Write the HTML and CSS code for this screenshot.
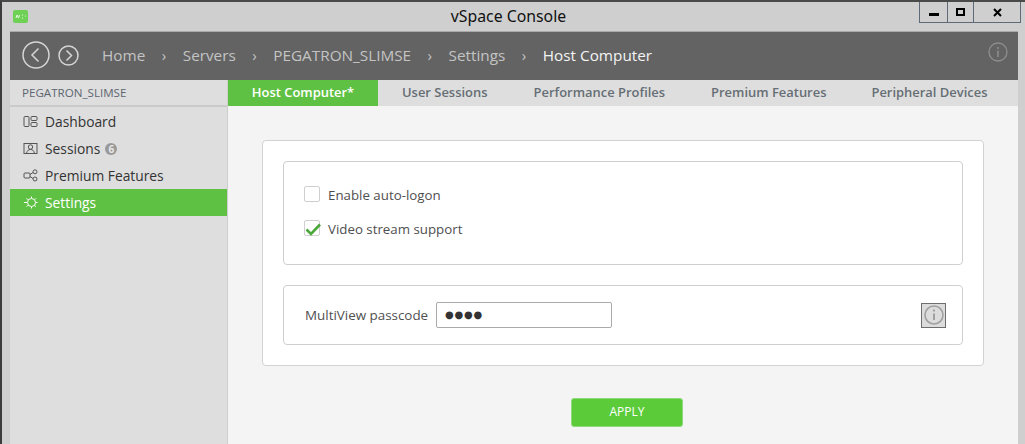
FILE: index.html
```html
<!DOCTYPE html>
<html lang="en">
<head>
<meta charset="utf-8">
<title>vSpace Console</title>
<link rel="stylesheet" href="styles.css">
</head>
<body>
<div class="window">
  <div class="titlebar">
    <svg class="app-icon" width="15" height="13" viewBox="0 0 15 13"><rect width="15" height="13" rx="2" fill="#6fd056"/><path d="M3 8l1-3 1.500 3 1-3M9 5h1M9 8h1M12 6h1" fill="none" stroke="#e8f8e2" stroke-width="1"/></svg>
    <div class="title">vSpace Console</div>
    <div class="winbtns">
      <div class="winbtn min"><span class="min-glyph"></span></div>
      <div class="winbtn max"><span class="max-glyph"></span></div>
      <div class="winbtn close"><svg width="9" height="9" viewBox="0 0 9 9"><path d="M1 1l7 7M8 1l-7 7" stroke="#000" stroke-width="2" fill="none"/></svg></div>
    </div>
  </div>
  <div class="app">
    <header class="crumbbar">
      <svg class="nav-back" width="28" height="28" viewBox="0 0 28 28"><circle cx="14" cy="14" r="13" fill="none" stroke="#d5d5d5" stroke-width="1.500"/><path d="M16.500 7.500L10 14l6.500 6.500" fill="none" stroke="#d5d5d5" stroke-width="1.500"/></svg>
      <svg class="nav-fwd" width="21" height="21" viewBox="0 0 21 21"><circle cx="10.500" cy="10.500" r="9.500" fill="none" stroke="#d5d5d5" stroke-width="1.500"/><path d="M8.500 5.500l5 5-5 5" fill="none" stroke="#d5d5d5" stroke-width="1.500"/></svg>
      <nav class="crumbs">
        <span>Home</span><i>›</i><span>Servers</span><i>›</i><span>PEGATRON_SLIMSE</span><i>›</i><span>Settings</span><i>›</i><span class="current">Host Computer</span>
      </nav>
      <svg class="head-info" width="20" height="20" viewBox="0 0 20 20"><circle cx="10" cy="10" r="9" fill="none" stroke="#8f8f8f" stroke-width="1.300"/><path d="M10 8.500v6.500M10 5v2" stroke="#8f8f8f" stroke-width="1.500"/></svg>
    </header>
    <div class="body">
      <aside class="sidebar">
        <div class="server">PEGATRON_SLIMSE</div>
        <ul class="menu">
          <li><svg width="15" height="13" viewBox="0 0 15 13"><g fill="none" stroke="#555"><rect x="1" y="1.500" width="5" height="10" rx="1"/><rect x="8" y="1.500" width="6" height="4" rx="1"/><rect x="8" y="7.500" width="6" height="4" rx="1"/></g></svg>Dashboard</li>
          <li><svg width="15" height="13" viewBox="0 0 15 13"><g fill="none" stroke="#555"><rect x="1" y="1.500" width="13" height="10"/><circle cx="7.500" cy="5" r="2.200"/><path d="M3.500 11.500c.5-3 2-4 4-4s3.500 1 4 4"/></g></svg>Sessions<b class="badge">6</b></li>
          <li><svg width="15" height="13" viewBox="0 0 15 13"><g fill="none" stroke="#555"><rect x="1" y="4" width="6" height="5" rx="1"/><circle cx="12" cy="2.800" r="2"/><circle cx="12" cy="10" r="2"/><path d="M7 5.500L10 3.500M7 7.500L10 9.500"/></g></svg>Premium Features</li>
          <li class="active"><svg width="15" height="13" viewBox="0 0 15 13"><g fill="none" stroke="#fff"><circle cx="8.500" cy="6.500" r="4"/><path d="M8.500 .5v1.500M8.500 11v1.500M1 6.500h3M13 6.500h1.500M3.500 2.300l1.500 1.500M3.500 10.700l1.500-1.500M13 2.300l-1.200 1.200M13 10.700l-1.200-1.200"/></g></svg>Settings</li>
        </ul>
      </aside>
      <main class="main">
        <div class="tabs">
          <div class="tab active">Host Computer*</div>
          <div class="tab t2">User Sessions</div>
          <div class="tab t3">Performance Profiles</div>
          <div class="tab t4">Premium Features</div>
          <div class="tab t5">Peripheral Devices</div>
        </div>
        <div class="content">
          <section class="card">
            <div class="panel options">
              <label class="check"><span class="box"></span>Enable auto-logon</label>
              <label class="check"><span class="box"><svg width="17" height="15" viewBox="0 0 17 15"><path d="M1.500 7.500L6 12 15 2.500" fill="none" stroke="#4aa83a" stroke-width="2.600"/></svg></span>Video stream support</label>
            </div>
            <div class="panel passcode">
              <span class="pass-label">MultiView passcode</span>
              <div class="pass-input">●●●●</div>
              <div class="info-btn"><svg width="20" height="20" viewBox="0 0 20 20"><circle cx="10" cy="10" r="9" fill="none" stroke="#a0a0a0" stroke-width="1.600"/><path d="M10 8.500v6.500M10 4.500v2" stroke="#a0a0a0" stroke-width="2"/></svg></div>
            </div>
          </section>
          <button class="apply">APPLY</button>
        </div>
      </main>
    </div>
  </div>
</div>
</body>
</html>
```
FILE: styles.css
```css
* { box-sizing: border-box; }
html, body { margin: 0; height: 100%; overflow: hidden; }
body { font-family: "Open Sans", "Noto Sans", sans-serif; }
.window {
  width: 1025px; height: 444px;
  background: #cfcfcf;
  border-top: 2px solid #4a4a4a;
  border-left: 2px solid #3c3c3c;
  display: flex; flex-direction: column;
}
.titlebar {
  height: 29px; flex: none;
  display: flex; align-items: flex-start;
  position: relative;
}
.app-icon { margin: 8px 0 0 11px; }
.title {
  position: absolute; left: 0; right: 0; top: 5px;
  text-align: center; font-size: 15.800px; color: #111; line-height: 19px;
  font-family: "Noto Sans", sans-serif;
  padding-right: 10px;
}
.winbtns {
  position: absolute; right: 4px; top: 0;
  display: flex; height: 21px;
  border: 1px solid #5f6a78; border-top: 0;
}
.winbtn { display: flex; align-items: center; justify-content: center; height: 100%; }
.min { width: 28px; border-right: 1px solid #5f6a78; }
.max { width: 26px; border-right: 1px solid #5f6a78; }
.close { width: 46px; }
.min-glyph { width: 10px; height: 3px; background: #000; margin-top: 4px; }
.max-glyph { width: 9px; height: 8px; border: 2px solid #000; }
.app {
  flex: 1; margin: 0 7px 0 8px;
  display: flex; flex-direction: column;
  min-height: 0;
}
.crumbbar {
  height: 49px; flex: none; background: #636363;
  border-top: 1px solid #a9a9a9;
  display: flex; align-items: center;
  padding: 0 10px 2px 12px;
  color: #c4c4c4;
}
.nav-fwd { margin-left: 8px; }
.crumbs {
  margin-left: 23px; flex: 1;
  display: flex; align-items: center;
  font-size: 15.300px; white-space: nowrap;
}
.crumbs i { font-style: normal; margin: 0 16.500px; font-size: 15px; }
.crumbs .current { color: #f4f4f4; }
.head-info { margin-top: -6px; }
.body { flex: 1; display: flex; min-height: 0; }
.sidebar {
  width: 218px; flex: none; background: #dedede;
  border-right: 1px solid #cdcdcd;
}
.server {
  height: 27px; border-bottom: 2px solid #cacaca;
  padding-left: 12px;
  font-size: 11.600px; line-height: 25px; color: #5d6670;
}
.menu { list-style: none; margin: 1px 0 0; padding: 0; }
.menu li {
  height: 27px; display: flex; align-items: center;
  padding-left: 13px;
  font-size: 13.800px; color: #333;
}
.menu li svg { margin-right: 7px; flex: none; }
.menu .active { background: #5fc144; color: #fff; }
.badge {
  width: 12px; height: 12px; border-radius: 50%;
  background: #9a9a9a; color: #e8e8e8;
  font-size: 10px; font-weight: 700; line-height: 12px; text-align: center;
  margin-left: 5px;
}
.main { flex: 1; display: flex; flex-direction: column; background: #f4f4f4; min-width: 0; }
.tabs {
  height: 26px; flex: none; background: #dedede;
  display: flex; align-items: center;
  font-size: 12.950px; font-weight: 600; color: #666e75;
}
.tab { height: 100%; line-height: 25px; white-space: nowrap; }
.tab.active { width: 150px; background: #5fc144; color: #fff; text-align: center; }
.t2 { margin-left: 24px; }
.t3 { margin-left: 46px; }
.t4 { margin-left: 46px; }
.t5 { margin-left: 45px; }
.content {
  flex: 1; padding: 34px 34px 0;
  display: flex; flex-direction: column; align-items: center;
}
.card {
  width: 722px; height: 226px; flex: none;
  background: #fff; border: 1px solid #d2d2d2; border-radius: 4px;
  padding: 20px 20px 0;
  display: flex; flex-direction: column; gap: 20px;
}
.panel { background: #fff; border: 1px solid #cfcfcf; border-radius: 4px; }
.options {
  height: 104px;
  padding: 25px 20px 0;
  display: flex; flex-direction: column; gap: 18px;
}
.check {
  display: flex; align-items: center; height: 16px;
  font-size: 13.300px; color: #4f4f4f;
}
.box {
  width: 16px; height: 16px; flex: none;
  border: 1px solid #cfcfcf; border-radius: 2px;
  margin-right: 8px; position: relative;
  margin-top: -2px;
}
.box svg { position: absolute; left: 0; top: 1px; }
.passcode {
  height: 60px; padding: 0 16px 0 21px;
  display: flex; align-items: center;
}
.pass-label { font-size: 13.400px; color: #4f4f4f; }
.pass-input {
  width: 176px; height: 26px; margin-left: 8px;
  border: 1px solid #aaa; border-radius: 2px; background: #fff;
  padding-left: 8px;
  font-size: 10px; line-height: 24px; color: #333; letter-spacing: .7px;
  font-family: "DejaVu Sans", sans-serif;
}
.info-btn {
  width: 25px; height: 25px; margin-left: auto;
  border: 1px solid #6e6e6e; background: #dcdcdc;
  display: flex; align-items: center; justify-content: center;
}
.apply {
  width: 112px; height: 29px; flex: none;
  margin: 32px 0 0 8px;
  background: #5bcb3a; border: 1px solid #8ed97a; border-radius: 3px;
  color: #fff; font-family: "Open Sans", sans-serif; font-size: 12px; padding: 0 0 2px;
}
```
